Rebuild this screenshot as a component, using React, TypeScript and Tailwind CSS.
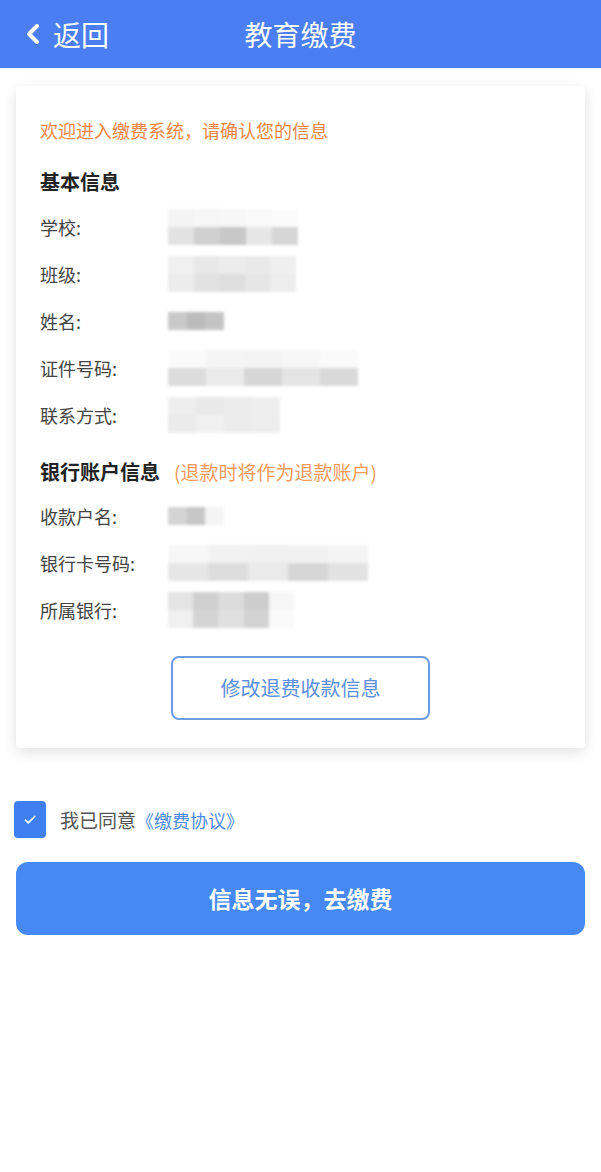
import { ChevronLeft, Check } from "lucide-react";

type Row = { label: string; cells: string[][]; width: number };

// pixelated placeholders for the masked values
const Mosaic = ({ cells, width }: { cells: string[][]; width: number }) => (
  <div className="flex flex-col blur-[1.5px]" style={{ width }}>
    {cells.map((row, i) => (
      <div key={i} className="flex">
        {row.map((c, j) => (
          <div key={j} className="h-[18px] flex-1" style={{ backgroundColor: c }} />
        ))}
      </div>
    ))}
  </div>
);

const basic: Row[] = [
  { label: "学校:", width: 130, cells: [["#f4f4f4", "#f6f6f6", "#f7f7f7", "#f9f9f9", "#fbfbfb"], ["#e2e2e2", "#d0d0d0", "#c8c8c8", "#e6e6e6", "#d6d6d6"]] },
  { label: "班级:", width: 128, cells: [["#f0f0f0", "#e8e8e8", "#ececec", "#e9e9e9", "#efefef"], ["#ececec", "#e2e2e2", "#dedede", "#e6e6e6", "#ededed"]] },
  { label: "姓名:", width: 56, cells: [["#c9c9c9", "#bcbcbc", "#c4c4c4"]] },
  { label: "证件号码:", width: 190, cells: [["#fafafa", "#f5f5f5", "#f4f4f4", "#f6f6f6", "#fafafa"], ["#dcdcdc", "#ebebeb", "#d6d6d6", "#e4e4e4", "#d9d9d9"]] },
  { label: "联系方式:", width: 112, cells: [["#eeeeee", "#e9e9e9", "#ececec", "#eeeeee"], ["#ebebeb", "#f0f0f0", "#ececec", "#ededed"]] },
];

const bank: Row[] = [
  { label: "收款户名:", width: 56, cells: [["#d4d4d4", "#c6c6c6", "#f4f4f4"]] },
  { label: "银行卡号码:", width: 200, cells: [["#f7f7f7", "#f2f2f2", "#f0f0f0", "#f1f1f1", "#f4f4f4"], ["#e6e6e6", "#dddddd", "#eaeaea", "#d6d6d6", "#e2e2e2"]] },
  { label: "所属银行:", width: 126, cells: [["#e4e4e4", "#cfcfcf", "#dcdcdc", "#cdcdcd", "#f6f6f6"], ["#f0f0f0", "#d4d4d4", "#e0e0e0", "#d2d2d2", "#fafafa"]] },
];

const InfoRow = ({ label, cells, width }: Row) => (
  <div className="flex items-center h-[47px]">
    <span className="w-[128px] text-[18px] leading-[24px] text-[#444]">{label}</span>
    <Mosaic cells={cells} width={width} />
  </div>
);

export default function App() {
  return (
    <div
      className="w-[601px] min-h-[1172px] bg-white"
      style={{ fontFamily: '"Noto Sans CJK SC", "Noto Sans", sans-serif' }}
    >
      <header className="relative h-[68px] bg-[#4c7ef3] flex items-center justify-center text-white">
        <div className="absolute left-[17px] top-0 h-full flex items-center gap-[4px]">
          <ChevronLeft size={32} strokeWidth={3} />
          <span className="text-[28px] leading-[34px]">返回</span>
        </div>
        <h1 className="text-[28px] leading-[34px]">教育缴费</h1>
      </header>

      <div className="px-[16px] pt-[18px]">
        <div className="bg-white rounded-[4px] shadow-[0_4px_14px_rgba(0,0,0,0.12)] px-[24px] pt-[32px] pb-[28px]">
          <p className="text-[18px] leading-[24px] text-[#f08748]">欢迎进入缴费系统，请确认您的信息</p>

          <h2 className="mt-[27px] mb-[8px] text-[20px] leading-[26px] font-bold text-[#222]">基本信息</h2>
          {basic.map((r) => (
            <InfoRow key={r.label} {...r} />
          ))}

          <div className="mt-[21px] mb-[7px] flex items-center gap-[14px] h-[26px]">
            <h2 className="text-[20px] leading-[26px] font-bold text-[#222]">银行账户信息</h2>
            <span className="text-[19px] leading-[26px] text-[#f39a5c]">(退款时将作为退款账户)</span>
          </div>
          {bank.map((r) => (
            <InfoRow key={r.label} {...r} />
          ))}

          <div className="flex justify-center mt-[23px]">
            <button className="w-[259px] h-[64px] rounded-[8px] border-2 border-[#6f9be3] text-[20px] text-[#5d8fe0]">
              修改退费收款信息
            </button>
          </div>
        </div>
      </div>

      <div className="px-[14px] mt-[53px] flex items-center gap-[14px]">
        <div className="w-[32px] h-[37px] rounded-[4px] bg-[#3f7ff0] flex items-center justify-center text-white">
          <Check size={14} strokeWidth={3} />
        </div>
        <span className="text-[19px] leading-[26px] text-[#555]">
          我已同意<span className="text-[#4f8ae6] text-[18px]">《缴费协议》</span>
        </span>
      </div>

      <div className="px-[16px] mt-[24px]">
        <button className="w-full h-[73px] rounded-[12px] bg-[#4689f4] text-white text-[23px] font-bold">
          信息无误，去缴费
        </button>
      </div>
    </div>
  );
}
